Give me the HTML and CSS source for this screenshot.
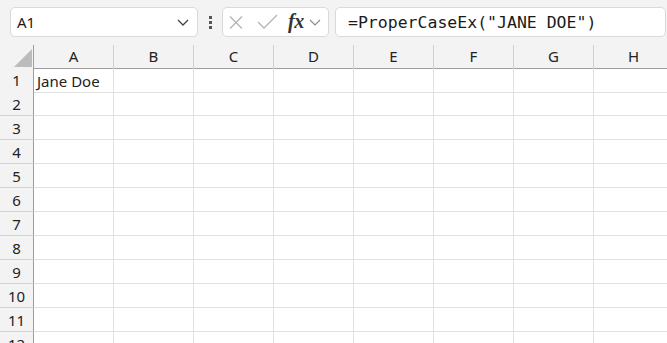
FILE: index.html
```html
<!DOCTYPE html>
<html lang="en">

<head>
    <meta charset="UTF-8">
    <title>Book1 - Excel</title>
    <link rel="stylesheet" href="styles.css">
</head>

<body>
    <div class="toolbar">
        <div class="name-box">
            <span>A1</span>
            <svg class="chevron" width="12" height="7" viewBox="0 0 12 7"><path d="M1 1l5 5 5-5" fill="none" stroke="#444" stroke-width="1.3"/></svg>
        </div>
        <div class="grip"><span></span><span></span><span></span></div>
        <div class="fx-buttons">
            <svg class="icon-x" width="18" height="13" viewBox="0 0 18 13"><path d="M2 0.5l12 12M14 0.5l-12 12" fill="none" stroke="#b4b4b4" stroke-width="1.3"/></svg>
            <svg class="icon-check" width="21" height="15" viewBox="0 0 21 15"><path d="M1 8l6 6 13-13" fill="none" stroke="#b4b4b4" stroke-width="1.3"/></svg>
            <span class="fx">fx</span>
            <svg class="chevron-sm" width="12" height="7" viewBox="0 0 12 7"><path d="M1 1l5 5 5-5" fill="none" stroke="#8a8a8a" stroke-width="1.1"/></svg>
        </div>
        <div class="formula">=ProperCaseEx("JANE DOE")</div>
    </div>

    <div class="sheet">
        <div class="row head">
            <div class="corner"></div>
            <div class="ch">A</div><div class="ch">B</div><div class="ch">C</div><div class="ch">D</div>
            <div class="ch">E</div><div class="ch">F</div><div class="ch">G</div><div class="ch">H</div>
        </div>
        <div class="row">
            <div class="rh">1</div>
            <div class="c">Jane Doe</div><div class="c"></div><div class="c"></div><div class="c"></div>
            <div class="c"></div><div class="c"></div><div class="c"></div><div class="c"></div>
        </div>
        <div class="row">
            <div class="rh">2</div>
            <div class="c"></div><div class="c"></div><div class="c"></div><div class="c"></div>
            <div class="c"></div><div class="c"></div><div class="c"></div><div class="c"></div>
        </div>
        <div class="row">
            <div class="rh">3</div>
            <div class="c"></div><div class="c"></div><div class="c"></div><div class="c"></div>
            <div class="c"></div><div class="c"></div><div class="c"></div><div class="c"></div>
        </div>
        <div class="row">
            <div class="rh">4</div>
            <div class="c"></div><div class="c"></div><div class="c"></div><div class="c"></div>
            <div class="c"></div><div class="c"></div><div class="c"></div><div class="c"></div>
        </div>
        <div class="row">
            <div class="rh">5</div>
            <div class="c"></div><div class="c"></div><div class="c"></div><div class="c"></div>
            <div class="c"></div><div class="c"></div><div class="c"></div><div class="c"></div>
        </div>
        <div class="row">
            <div class="rh">6</div>
            <div class="c"></div><div class="c"></div><div class="c"></div><div class="c"></div>
            <div class="c"></div><div class="c"></div><div class="c"></div><div class="c"></div>
        </div>
        <div class="row">
            <div class="rh">7</div>
            <div class="c"></div><div class="c"></div><div class="c"></div><div class="c"></div>
            <div class="c"></div><div class="c"></div><div class="c"></div><div class="c"></div>
        </div>
        <div class="row">
            <div class="rh">8</div>
            <div class="c"></div><div class="c"></div><div class="c"></div><div class="c"></div>
            <div class="c"></div><div class="c"></div><div class="c"></div><div class="c"></div>
        </div>
        <div class="row">
            <div class="rh">9</div>
            <div class="c"></div><div class="c"></div><div class="c"></div><div class="c"></div>
            <div class="c"></div><div class="c"></div><div class="c"></div><div class="c"></div>
        </div>
        <div class="row">
            <div class="rh">10</div>
            <div class="c"></div><div class="c"></div><div class="c"></div><div class="c"></div>
            <div class="c"></div><div class="c"></div><div class="c"></div><div class="c"></div>
        </div>
        <div class="row">
            <div class="rh">11</div>
            <div class="c"></div><div class="c"></div><div class="c"></div><div class="c"></div>
            <div class="c"></div><div class="c"></div><div class="c"></div><div class="c"></div>
        </div>
        <div class="row">
            <div class="rh">12</div>
            <div class="c"></div><div class="c"></div><div class="c"></div><div class="c"></div>
            <div class="c"></div><div class="c"></div><div class="c"></div><div class="c"></div>
        </div>
    </div>
</body>

</html>
```

FILE: styles.css
```css
body {
    margin: 0;
    font-family: 'Noto Sans', 'Open Sans', sans-serif;
    font-size: 15px;
    color: #222;
    background: white;
    overflow: hidden;
}

.toolbar {
    display: flex;
    align-items: center;
    height: 45px;
    padding: 7px 1px 8px 10px;
    box-sizing: border-box;
    background: #f3f3f3;
}

.name-box,
.fx-buttons,
.formula {
    height: 30px;
    box-sizing: border-box;
    background: white;
    border: 1px solid #d9d9d9;
    border-radius: 5px;
    display: flex;
    align-items: center;
}

.name-box {
    width: 188px;
    padding: 0 8px 0 6px;
    justify-content: space-between;
}

.name-box span {
    font-size: 15px;
    color: #1a1a1a;
}

.grip {
    display: flex;
    flex-direction: column;
    gap: 2px;
    margin: 0 10px 0 11px;
}

.grip span {
    width: 3px;
    height: 3px;
    background: #555;
}

.fx-buttons {
    width: 107px;
    padding: 0 2px 0 5px;
}

.icon-x {
    margin-right: 11px;
}

.icon-check {
    margin-right: 10px;
    margin-top: -2px;
}

.fx {
    font-family: 'Liberation Serif', 'DejaVu Serif', serif;
    font-style: italic;
    font-size: 20px;
    font-weight: bold;
    color: #333;
    margin-right: 5px;
    margin-top: -2px;
    letter-spacing: -0.5px;
}

.formula {
    flex: 1;
    margin-left: 6px;
    padding-left: 12px;
    font-family: 'DejaVu Sans Mono', 'Liberation Mono', monospace;
    font-size: 16.5px;
    color: #1a1a1a;
}

.row {
    display: grid;
    grid-template-columns: 34px repeat(8, 80px);
    height: 24px;
}

.row.head {
    height: 23px;
}

.row > div {
    box-sizing: border-box;
    border-right: 1px solid #e1e1e1;
    border-bottom: 1px solid #e1e1e1;
}

.row.head > div {
    background: #f3f3f3;
    border-bottom: 1px solid #9e9e9e;
    border-right-color: #cfcfcf;
    text-align: center;
    line-height: 23px;
}

.row.head .corner {
    border-right-color: #9e9e9e;
    display: flex;
    justify-content: flex-end;
    align-items: flex-end;
    padding: 0 1px 1px 0;
}

.corner::after {
    content: '';
    width: 18px;
    height: 18px;
    background: #bcbcbc;
    clip-path: polygon(100% 0, 100% 100%, 0 100%);
}

.row .rh {
    background: #f3f3f3;
    border-right-color: #9e9e9e;
    border-bottom-color: #d2d2d2;
    text-align: center;
    padding-top: 2px;
    line-height: 21px;
}

.c {
    padding: 2px 0 0 3px;
    line-height: 22px;
    white-space: nowrap;
}
```
